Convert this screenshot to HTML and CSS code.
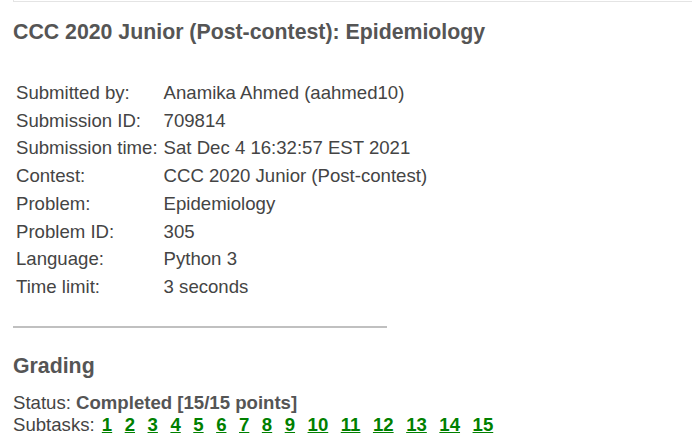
FILE: index.html
```html
<!DOCTYPE html>
<html lang="en">
<head>
    <meta charset="UTF-8">
    <title>Submission 709814</title>
    <link rel="stylesheet" href="styles.css">
</head>
<body>
    <div class="page">
        <div class="top-edge"></div>

        <h3 class="heading">CCC 2020 Junior (Post-contest): Epidemiology</h3>

        <table class="info">
            <tr><td class="label">Submitted by:</td><td>Anamika Ahmed (aahmed10)</td></tr>
            <tr><td class="label">Submission ID:</td><td>709814</td></tr>
            <tr><td class="label">Submission time:</td><td>Sat Dec 4 16:32:57 EST 2021</td></tr>
            <tr><td class="label">Contest:</td><td>CCC 2020 Junior (Post-contest)</td></tr>
            <tr><td class="label">Problem:</td><td>Epidemiology</td></tr>
            <tr><td class="label">Problem ID:</td><td>305</td></tr>
            <tr><td class="label">Language:</td><td>Python 3</td></tr>
            <tr><td class="label">Time limit:</td><td>3 seconds</td></tr>
        </table>

        <hr class="divider">

        <h3 class="heading grading">Grading</h3>
        <div class="status">Status: <b>Completed [15/15 points]</b></div>
        <div class="subtasks">Subtasks:
            <a href="#">1</a>
            <a href="#">2</a>
            <a href="#">3</a>
            <a href="#">4</a>
            <a href="#">5</a>
            <a href="#">6</a>
            <a href="#">7</a>
            <a href="#">8</a>
            <a href="#">9</a>
            <a href="#">10</a>
            <a href="#">11</a>
            <a href="#">12</a>
            <a href="#">13</a>
            <a href="#">14</a>
            <a href="#">15</a>
        </div>
    </div>
</body>
</html>
```

FILE: styles.css
```css
body {
    margin: 0;
    font-family: 'Liberation Sans', Arial, sans-serif;
    font-size: 18.6px;
    color: #444;
    background: #fff;
}
.page {
    padding-left: 13px;
}
.top-edge {
    height: 1px;
    border-left: 1px solid #e4e4e4;
    border-bottom: 1px solid #e4e4e4;
}
.heading {
    margin: 18px 0 0 0;
    font-size: 21.3px;
    font-weight: bold;
    color: #555;
    line-height: 24px;
}
.info {
    margin-top: 35px;
    border-collapse: collapse;
    color: #444;
}
.info td {
    padding: 2px 3px;
    line-height: 23.7px;
    white-space: nowrap;
}
.divider {
    width: 374px;
    margin: 25px 0 0 0;
    border: none;
    border-top: 2px solid #c0c0c0;
    height: 0;
}
.grading {
    margin-top: 26px;
}
.status {
    margin-top: 13px;
    line-height: 23px;
}
.status b {
    color: #555;
}
.subtasks {
    line-height: 22px;
}
.subtasks a {
    color: #008000;
    font-weight: bold;
    margin-left: 7.35px;
}
.subtasks a:first-child {
    margin-left: 2px;
}
```
